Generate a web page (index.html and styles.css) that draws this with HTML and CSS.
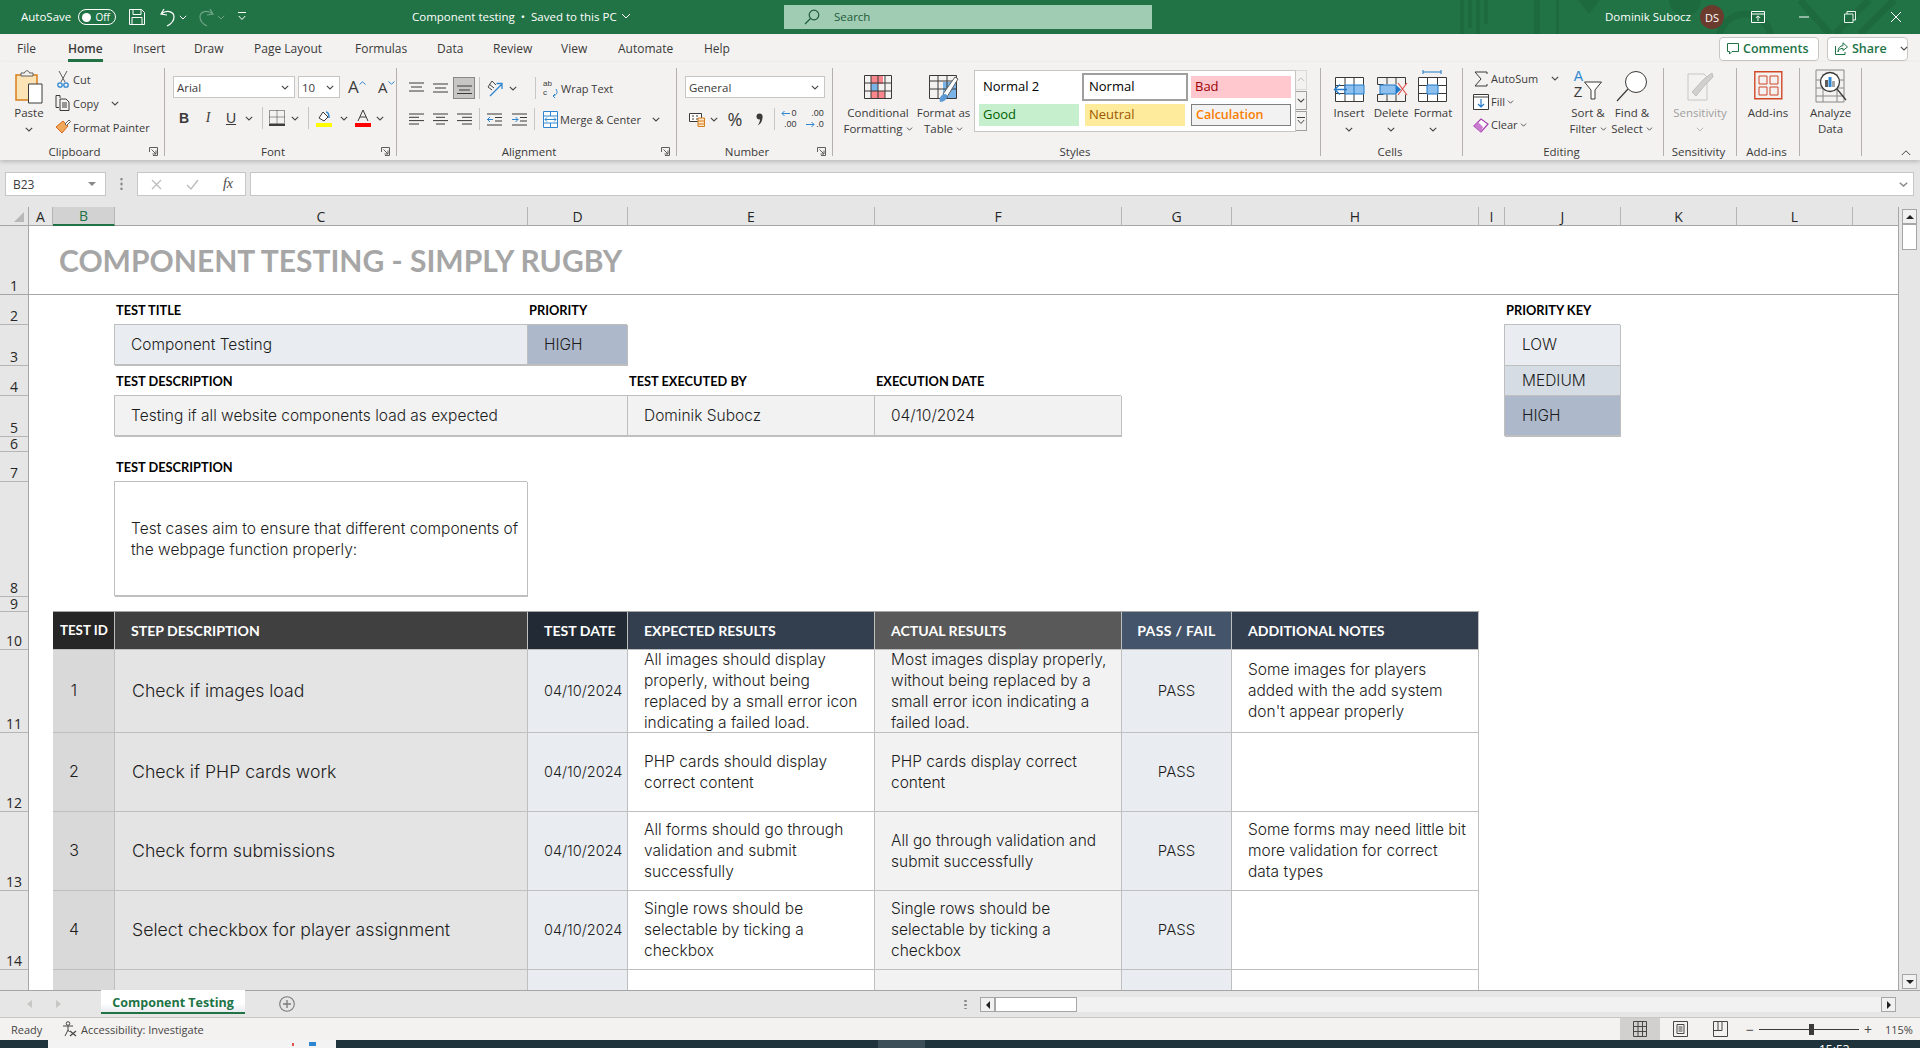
FILE: index.html
```html
<!DOCTYPE html>
<html>

<head>
    <title>Component testing - Excel</title>
    <link rel="stylesheet" href="styles.css">
</head>

<body>
    <svg class="sprite">
        <symbol id="chev" viewBox="0 0 8 5"><path d="M.8.8 4 4 7.2.8" fill="none" stroke="#484644" stroke-width="1.1"/></symbol>
        <symbol id="launcher" viewBox="0 0 9 9"><path d="M.5 5V.5H8.5V8.5H4M2.5 2.5 7 7M3.5 7H7V3.5" fill="none" stroke="#605e5c"/></symbol>
    </svg>

    <header class="titlebar">
        <svg class="title-art" width="460" height="34" viewBox="0 0 460 34">
            <g fill="#1d6a3f">
                <rect x="0" width="4" height="34"/><rect x="8" width="4" height="28"/><rect x="16" width="4" height="34"/><rect x="24" width="4" height="24"/><rect x="74" width="6" height="34"/><rect x="96" width="3" height="34"/>
                <path d="M118 0h22l-11 14z"/><circle cx="225" cy="0" r="16"/>
            </g>
            <g fill="none" stroke="#1d6a3f" stroke-width="7">
                <circle cx="285" cy="40" r="26"/><path d="M375 34l34-34M400 34l34-34M340 0l30 34"/>
            </g>
        </svg>
        <div class="qat">
            <span class="raise">AutoSave</span>
            <span class="toggle"><i></i>Off</span>
            <svg width="16" height="16" viewBox="0 0 16 16"><path d="M.5.500h12l3 3v12H.5zM4 .5v5h8v-5M3 15.500v-7h10v7" fill="none" stroke="#fff"/></svg>
            <svg width="16" height="19" viewBox="0 0 16 19"><path d="M4 1 1 6l6 1M1.500 6C6 1.500 14 3 14 9c0 4-3 7-7 9" fill="none" stroke="#fff" stroke-width="1.200"/></svg>
            <svg width="8" height="5" viewBox="0 0 8 5"><path d="M.8.8 4 4 7.200.8" fill="none" stroke="#fff"/></svg>
            <svg class="faded" width="16" height="19" viewBox="0 0 16 19"><path d="M12 1l3 5-6 1M14.500 6C10 1.500 2 3 2 9c0 4 3 7 7 9" fill="none" stroke="#fff" stroke-width="1.200"/></svg>
            <svg class="faded" width="8" height="5" viewBox="0 0 8 5"><path d="M.8.8 4 4 7.200.8" fill="none" stroke="#fff"/></svg>
            <svg width="8" height="10" viewBox="0 0 8 10"><path d="M0 .5h8M.8 4 4 7.500 7.200 4" fill="none" stroke="#fff"/></svg>
        </div>
        <div class="doc-title raise">Component testing &nbsp;•&nbsp; Saved to this PC <svg width="10" height="6" viewBox="0 0 10 6"><path d="M1 1l4 4 4-4" fill="none" stroke="#fff"/></svg></div>
        <div class="search">
            <svg width="16" height="16" viewBox="0 0 16 16"><circle cx="10" cy="6" r="4.800" fill="none" stroke="#1f5c3a" stroke-width="1.200"/><path d="M6.500 9.500 1 15" stroke="#1f5c3a" stroke-width="1.200"/></svg>
            <span class="raise">Search</span>
        </div>
        <div class="user raise">Dominik Subocz</div>
        <div class="avatar">DS</div>
        <div class="winbtns">
            <svg width="14" height="12" viewBox="0 0 14 12"><path d="M.5.500h13v11H.5zM.5 3h13M7 10V5M4.800 7 7 4.800 9.200 7" fill="none" stroke="#fff"/></svg>
            <svg width="12" height="2"><path d="M1 1h10" stroke="#fff"/></svg>
            <svg width="12" height="12" viewBox="0 0 12 12"><path d="M.5 3h8.500v8.500H.5zM3 3V.5h8.500V9H9" fill="none" stroke="#fff" stroke-width=".9"/></svg>
            <svg width="12" height="12" viewBox="0 0 12 12"><path d="M1 1l10 10M11 1 1 11" stroke="#fff"/></svg>
        </div>
    </header>

    <nav class="tabs">
        <div class="tab-list">
            <span>File</span>
            <span><b class="tab-active">Home</b></span>
            <span>Insert</span>
            <span>Draw</span>
            <span>Page Layout</span>
            <span>Formulas</span>
            <span>Data</span>
            <span>Review</span>
            <span>View</span>
            <span>Automate</span>
            <span>Help</span>
        </div>
        <button class="tab-btn comments">
            <svg width="12" height="12" viewBox="0 0 12 12"><path d="M.5.500h11v8H5L2.500 11V8.500h-2z" fill="none" stroke="#217346"/></svg>Comments
        </button>
        <div class="tab-btn share">
            <svg width="13" height="13" viewBox="0 0 13 13"><path d="M8 .8 12.500 5 8 8.500V6.300C5 6.300 3.500 8 3 10 3 6 5 3.800 8 3.600zM.5 4v8.500H10V10" fill="none" stroke="#217346"/></svg>Share
            <svg class="share-chev" width="8" height="5"><use href="#chev"/></svg>
        </div>
    </nav>

    <section class="ribbon">
        <div class="group g-clipboard">
            <div class="group-body">
                <div class="big paste">
                    <svg width="30" height="37" viewBox="0 0 30 37"><path d="M2 7h21v25H2z" fill="#fbe3b5" stroke="#d67f1c" stroke-width="1.500"/><path d="M7 8V5h3.500C11 2 15 2 15.500 5H19v3z" fill="#f3f2f1" stroke="#605e5c"/><path d="M14.500 16h13.500v19H14.500z" fill="#fff" stroke="#3b3a39"/></svg>
                    <span>Paste</span>
                    <svg width="8" height="5"><use href="#chev"/></svg>
                </div>
                <div class="small-col">
                    <div class="small"><svg width="12" height="17" viewBox="0 0 12 17"><path d="M2 0l6 11M10 0 4 11" stroke="#605e5c" fill="none"/><circle cx="3" cy="14" r="2.200" fill="none" stroke="#2e86d0" stroke-width="1.300"/><circle cx="9" cy="14" r="2.200" fill="none" stroke="#2e86d0" stroke-width="1.300"/></svg>Cut</div>
                    <div class="small"><svg width="16" height="16" viewBox="0 0 16 16"><path d="M5 3V.5H1v12h3M5 4h6l3 3v8.500H5zM7 8h5M7 10h5M7 12h5" fill="none" stroke="#3b3a39"/></svg>Copy<svg class="copy-chev" width="8" height="5"><use href="#chev"/></svg></div>
                    <div class="small"><svg width="16" height="16" viewBox="0 0 16 16"><path d="M1 8 8 2l5 5-6 7C5 12 3 10 1 8z" fill="#f0a95a" stroke="#d6691c"/><path d="M10 5l4-4 1.500 1.500-4 4z" fill="#fff" stroke="#605e5c"/></svg>Format Painter</div>
                </div>
            </div>
            <div class="group-foot"><span>Clipboard</span><svg class="launcher" width="9" height="9"><use href="#launcher"/></svg></div>
        </div>

        <div class="group g-font">
            <div class="group-body stack">
                <div class="font-row1">
                    <div class="combo">Arial<svg width="8" height="5"><use href="#chev"/></svg></div>
                    <div class="combo">10<svg width="8" height="5"><use href="#chev"/></svg></div>
                    <div class="growth">A<svg width="7" height="4"><path d="M.5 3.500 3.500.8l3 2.700" fill="none" stroke="#2e86d0"/></svg></div>
                    <div class="growth shrink">A<svg width="7" height="4"><path d="M.5.500 3.500 3.200l3-2.700" fill="none" stroke="#2e86d0"/></svg></div>
                </div>
                <div class="font-row2">
                    <span class="glyph-b">B</span>
                    <span class="glyph-i">I</span>
                    <span class="glyph-u">U</span>
                    <svg width="8" height="5"><use href="#chev"/></svg>
                    <i class="sep"></i>
                    <svg width="16" height="16" viewBox="0 0 16 16"><path d="M.5.500h15v13H.5zM8 .5v13M.5 7h15" fill="none" stroke="#3b3a39" stroke-dasharray="1 1"/><path d="M0 15h16" stroke="#000" stroke-width="1.500"/></svg>
                    <svg width="8" height="5"><use href="#chev"/></svg>
                    <i class="sep"></i>
                    <svg width="16" height="18" viewBox="0 0 16 18"><path d="M3 9l4-6 5 5-4 4z" fill="#fff" stroke="#3b3a39"/><path d="M10 3c3 0 3 4 3 6" fill="none" stroke="#2e86d0" stroke-width="1.500"/><path d="M0 14h16v4H0z" fill="#ffff00"/></svg>
                    <svg width="8" height="5"><use href="#chev"/></svg>
                    <svg width="16" height="18" viewBox="0 0 16 18"><path d="M3 12 8 1l5 11M5 8h6" fill="none" stroke="#3b3a39"/><path d="M0 14h16v4H0z" fill="#ff0000"/></svg>
                    <svg width="8" height="5"><use href="#chev"/></svg>
                </div>
            </div>
            <div class="group-foot"><span>Font</span><svg class="launcher" width="9" height="9"><use href="#launcher"/></svg></div>
        </div>

        <div class="group g-align">
            <div class="group-body stack">
                <div class="align-row1">
                    <svg width="15" height="12" viewBox="0 0 15 12"><path d="M0 1h15M2 5h11M0 9h15" stroke="#3b3a39"/></svg>
                    <svg width="15" height="12" viewBox="0 0 15 12"><path d="M0 2h15M2 6h11M0 10h15" stroke="#3b3a39"/></svg>
                    <span class="tool-on"><svg width="15" height="12" viewBox="0 0 15 12"><path d="M0 4h15M2 8h11M0 11.500h15" stroke="#3b3a39"/></svg></span>
                    <i class="sep"></i>
                    <svg width="17" height="17" viewBox="0 0 17 17"><path d="M3 16 15 4M15 9V3.500H9.500" fill="none" stroke="#2e86d0" stroke-width="1.300"/><path d="M1 7l4 3M2 4l5 4M5 1l4 4M1 7l4-6" fill="none" stroke="#484644"/></svg>
                    <svg width="8" height="5"><use href="#chev"/></svg>
                    <i class="sep sep-end"></i>
                    <div class="small wide-tool"><div class="wrap-ic"><span>ab<br>c</span><svg width="6" height="9" viewBox="0 0 6 9"><path d="M4 0c2 3 1 6-3 7M3 5 1 7l2 2" fill="none" stroke="#2e86d0"/></svg></div>Wrap Text</div>
                </div>
                <div class="align-row2">
                    <svg width="15" height="12" viewBox="0 0 15 12"><path d="M0 1h15M0 4.300h10M0 7.600h15M0 11h10" stroke="#3b3a39"/></svg>
                    <svg width="15" height="12" viewBox="0 0 15 12"><path d="M0 1h15M3 4.300h9M0 7.600h15M3 11h9" stroke="#3b3a39"/></svg>
                    <svg width="15" height="12" viewBox="0 0 15 12"><path d="M0 1h15M5 4.300h10M0 7.600h15M5 11h10" stroke="#3b3a39"/></svg>
                    <i class="sep"></i>
                    <svg width="15" height="13" viewBox="0 0 15 13"><path d="M0 1h15M8 4.500h7M8 8h7M0 12h15" stroke="#3b3a39"/><path d="M6 6.500H0M3 4 .5 6.500 3 9" fill="none" stroke="#2e86d0"/></svg>
                    <svg width="15" height="13" viewBox="0 0 15 13"><path d="M0 1h15M8 4.500h7M8 8h7M0 12h15" stroke="#3b3a39"/><path d="M0 6.500h6M3.500 4 6 6.500 3.500 9" fill="none" stroke="#2e86d0"/></svg>
                    <i class="sep"></i>
                    <div class="small wide-tool"><svg width="15" height="17" viewBox="0 0 15 17"><path d="M.5.500h14v16H.5zM.5 5h14M.5 12h14M7.500 .5V5M7.500 12v4.500" fill="#fff" stroke="#2e86d0"/><path d="M2 8.500h11M4 6.500l-2 2 2 2M11 6.500l2 2-2 2" fill="none" stroke="#2e86d0"/></svg>Merge &amp; Center<svg class="merge-chev" width="8" height="5"><use href="#chev"/></svg></div>
                </div>
            </div>
            <div class="group-foot"><span>Alignment</span><svg class="launcher" width="9" height="9"><use href="#launcher"/></svg></div>
        </div>

        <div class="group g-number">
            <div class="group-body stack">
                <div class="combo combo-general">General<svg width="8" height="5"><use href="#chev"/></svg></div>
                <div class="number-row">
                    <svg width="16" height="15" viewBox="0 0 16 15"><path d="M.5 1.500h12v8H.5z" fill="#fff" stroke="#3b3a39"/><path d="M3 4h2M3 7h2M7 4h2M7 7h2" stroke="#3b3a39"/><path d="M9 6h6.500v8.500H9z" fill="#fce4c4" stroke="#d67f1c"/><path d="M9 9h6.500M9 12h6.500" stroke="#d67f1c"/></svg>
                    <svg width="8" height="5"><use href="#chev"/></svg>
                    <span class="glyph-pct">%</span>
                    <svg width="7" height="13" viewBox="0 0 7 13"><circle cx="3.500" cy="3.500" r="3" fill="#3b3a39"/><path d="M6.500 3.500C6.500 8 5 11 1.500 12.500 3.500 10 4 8 4 6z" fill="#3b3a39"/></svg>
                    <i class="sep"></i>
                    <div class="dec">
                        <div class="dec-line"><svg width="9" height="7" viewBox="0 0 9 7"><path d="M9 3.500H1M3.500 1 1 3.500 3.500 6" fill="none" stroke="#2e86d0"/></svg>0</div>
                        <div class="dec-line">.00</div>
                    </div>
                    <div class="dec">
                        <div class="dec-line">.00</div>
                        <div class="dec-line"><svg width="9" height="7" viewBox="0 0 9 7"><path d="M0 3.500h8M5.500 1 8 3.500 5.500 6" fill="none" stroke="#2e86d0"/></svg>.0</div>
                    </div>
                </div>
            </div>
            <div class="group-foot"><span>Number</span><svg class="launcher" width="9" height="9"><use href="#launcher"/></svg></div>
        </div>

        <div class="group g-styles">
            <div class="group-body">
                <div class="big w-cf">
                    <svg width="28" height="37" viewBox="0 0 28 37"><path d="M7 7h12v9H7zM7 23h14v7H7z" fill="#f8868c"/><path d="M7 16h7v7H7z" fill="#79b3e8"/><path d="M.5 7.500h27v23H.5zM7 7.500v23M14 7.500v23M21 7.500v23M.5 15h27M.5 23h27" fill="none" stroke="#3b3a39"/></svg>
                    <span>Conditional</span>
                    <span>Formatting <svg width="7" height="4"><use href="#chev"/></svg></span>
                </div>
                <div class="big w-ft">
                    <svg width="30" height="37" viewBox="0 0 30 37"><path d="M14 14h14v16H14z" fill="#79b3e8"/><path d="M.5 7.500h27v23H.5z" fill="none" stroke="#3b3a39"/><path d="M.5 13h27M.5 21h27M9 7.500v23M18 7.500v23" fill="none" stroke="#3b3a39"/><path d="M14 26 26 9l3 2-11 18z" fill="#fff" stroke="#605e5c"/><path d="M11 34c-2-6 5-10 7-7 1 4-3 7-7 7z" fill="#5a9ad5"/></svg>
                    <span>Format as</span>
                    <span>Table <svg width="7" height="4"><use href="#chev"/></svg></span>
                </div>
                <div class="gallery">
                    <div class="style-grid">
                        <div class="style">Normal 2</div>
                        <div class="style style-sel">Normal</div>
                        <div class="style style-bad">Bad</div>
                        <div class="style style-good">Good</div>
                        <div class="style style-neutral">Neutral</div>
                        <div class="style style-calc">Calculation</div>
                    </div>
                    <div class="gallery-scroll">
                        <span class="disabled"><svg width="8" height="5" viewBox="0 0 8 5"><path d="M.8 4 4 .8 7.200 4" fill="none" stroke="#bbb"/></svg></span>
                        <span><svg width="8" height="5"><use href="#chev"/></svg></span>
                        <span><svg width="8" height="8" viewBox="0 0 8 8"><path d="M0 .5h8M.8 3 4 6.500 7.200 3" fill="none" stroke="#484644"/></svg></span>
                    </div>
                </div>
            </div>
            <div class="group-foot"><span>Styles</span></div>
        </div>

        <div class="group g-cells">
            <div class="group-body">
                <div class="big w-cell">
                    <svg width="33" height="37" viewBox="0 0 33 37"><path d="M2.500 9.500h28v24h-28zM2.500 17.500h28M2.500 25.500h28M12 9.500v24M21 9.500v24" fill="#fff" stroke="#3b3a39"/><path d="M12 17h19v9H12z" fill="#8dc0ee" stroke="#1f78c8"/><path d="M21 17v9" stroke="#1f78c8"/><path d="M14 21.500H2M7 16.500 1.500 21.500l5.500 5" fill="none" stroke="#1f78c8" stroke-width="1.300"/></svg>
                    <span>Insert</span>
                    <svg width="8" height="5"><use href="#chev"/></svg>
                </div>
                <div class="big w-cell">
                    <svg width="33" height="37" viewBox="0 0 33 37"><path d="M2.500 9.500h28v7M2.500 33.500h28v-7M2.500 9.500v7h6M2.500 33.500v-7h6M12 9.500v7M21 9.500v7M12 33.500v-7M21 33.500v-7" fill="none" stroke="#3b3a39"/><path d="M5 17h16v9H5z" fill="#8dc0ee" stroke="#1f78c8"/><path d="M21 17l5 4.500-5 4.500z" fill="#1f78c8"/><path d="M23 15l9 12M32 15l-9 12" stroke="#e0524c" stroke-width="1.200"/></svg>
                    <span>Delete</span>
                    <svg width="8" height="5"><use href="#chev"/></svg>
                </div>
                <div class="big w-cell">
                    <svg width="30" height="37" viewBox="0 0 30 37"><path d="M.5 9.500h28v24H.5zM.5 17.500h28M.5 25.500h28M9.500 9.500v24M19.500 9.500v24" fill="#fff" stroke="#3b3a39"/><path d="M9 17h11v9H9z" fill="#8dc0ee" stroke="#1f78c8"/><path d="M5 4h18M5 2v4M23 2v4" stroke="#1f78c8"/></svg>
                    <span>Format</span>
                    <svg width="8" height="5"><use href="#chev"/></svg>
                </div>
            </div>
            <div class="group-foot"><span>Cells</span></div>
        </div>

        <div class="group g-editing">
            <div class="group-body">
                <div class="small-col w-edit">
                    <div class="small"><svg width="14" height="16" viewBox="0 0 14 16"><path d="M13 3V1H1l6 7-6 7h12v-2" fill="none" stroke="#3b3a39"/></svg>AutoSum<svg class="sum-chev" width="8" height="5"><use href="#chev"/></svg></div>
                    <div class="small"><svg width="16" height="16" viewBox="0 0 16 16"><path d="M.5.500h15v15H.5zM.5 3h15" fill="#fff" stroke="#3b3a39"/><path d="M8 5v8M5 10l3 3 3-3" fill="none" stroke="#1f78c8" stroke-width="1.200"/></svg>Fill <svg width="7" height="4"><use href="#chev"/></svg></div>
                    <div class="small"><svg width="16" height="16" viewBox="0 0 16 16"><path d="M1 9 8 2l7 5-7 8z" fill="#fff" stroke="#a83fb0" stroke-width="1.200"/><path d="M1 9l4-4 5 5-2 5z" fill="#c97bd0"/></svg>Clear <svg width="7" height="4"><use href="#chev"/></svg></div>
                </div>
                <div class="big w-edit-big">
                    <div class="sort-ic">
                        <div class="az"><b>A</b><br>Z</div>
                        <svg width="18" height="19" viewBox="0 0 18 19"><path d="M.5 1h17L11 9v9H7V9z" fill="#fff" stroke="#3b3a39"/></svg>
                    </div>
                    <span>Sort &amp;</span>
                    <span>Filter <svg width="7" height="4"><use href="#chev"/></svg></span>
                </div>
                <div class="big w-edit-big">
                    <svg width="32" height="37" viewBox="0 0 32 37"><circle cx="20" cy="14" r="10.500" fill="#fff" stroke="#3b3a39"/><path d="M12 21 1 33" stroke="#3b3a39" stroke-width="1.200"/></svg>
                    <span>Find &amp;</span>
                    <span>Select <svg width="7" height="4"><use href="#chev"/></svg></span>
                </div>
            </div>
            <div class="group-foot"><span>Editing</span></div>
        </div>

        <div class="group g-sens">
            <div class="group-body">
                <div class="big disabled-text">
                    <svg width="28" height="37" viewBox="0 0 28 37"><path d="M2 6h16l3 3v23H2z" fill="#f3f2f1" stroke="#c8c6c4"/><path d="M6 24 18 11l8-6 1 4-8 8-9 11z" fill="#d2d0ce" stroke="#c0bebc"/></svg>
                    <span>Sensitivity</span>
                    <svg width="8" height="5" viewBox="0 0 8 5"><path d="M.8.8 4 4 7.200.8" fill="none" stroke="#bbb"/></svg>
                </div>
            </div>
            <div class="group-foot"><span>Sensitivity</span></div>
        </div>

        <div class="group g-addins">
            <div class="group-body">
                <div class="big">
                    <svg width="29" height="37" viewBox="0 0 29 37"><path d="M.8 3.800h27v27h-27z" fill="none" stroke="#d24726" stroke-width="1.400"/><path d="M5 8h8v8H5zM16 8h8v8h-8zM5 19h8v8H5zM16 19h8v8h-8z" fill="none" stroke="#d24726"/></svg>
                    <span>Add-ins</span>
                </div>
            </div>
            <div class="group-foot"><span>Add-ins</span></div>
        </div>

        <div class="group g-analyze">
            <div class="group-body">
                <div class="big">
                    <svg width="32" height="37" viewBox="0 0 32 37"><path d="M1 2h28v4H1z" fill="#605e5c"/><path d="M1 2h28v32H1zM1 12h28M1 20h28M1 28h28M8 6v28M22 6v28" fill="#f3f2f1" stroke="#8a8886"/><circle cx="15" cy="14" r="9.500" fill="#fff" stroke="#3b3a39" stroke-width="1.300"/><path d="M10 12h3v7h-3z" fill="#605e5c"/><path d="M13.500 9h3v10h-3z" fill="#2e86d0"/><path d="M17 13h3v6h-3z" fill="#a6a6a6"/><path d="M22 21l9 11" stroke="#3b3a39" stroke-width="1.300"/></svg>
                    <span>Analyze</span>
                    <span>Data</span>
                </div>
            </div>
        </div>

        <svg class="collapse" width="10" height="6" viewBox="0 0 10 6"><path d="M.8 5 5 .8 9.200 5" fill="none" stroke="#484644"/></svg>
    </section>

    <section class="formula-bar">
        <div class="name-box">B23<svg width="8" height="4" viewBox="0 0 8 4"><path d="M0 0h8L4 4z" fill="#8a8886"/></svg></div>
        <div class="fb-dots"></div>
        <div class="fb-actions">
            <svg width="11" height="11" viewBox="0 0 11 11"><path d="M1 1l9 9M10 1l-9 9" stroke="#bdbbb9" stroke-width="1.200"/></svg>
            <svg width="13" height="11" viewBox="0 0 13 11"><path d="M1 6l4 4 7-9" fill="none" stroke="#bdbbb9" stroke-width="1.300"/></svg>
            <span class="fx">fx</span>
        </div>
        <div class="fb-input"><svg width="9" height="5" viewBox="0 0 9 5"><path d="M.8.800 4.500 4 8.200.8" fill="none" stroke="#8a8886" stroke-width="1.500"/></svg></div>
    </section>

    <main class="workspace">
        <div class="sheet">
            <div class="corner r0 rowhead-col"><i></i></div>
            <div class="colhead r0 ca">A</div>
            <div class="colhead r0 cb selected">B</div>
            <div class="colhead r0 cc">C</div>
            <div class="colhead r0 cd">D</div>
            <div class="colhead r0 ce">E</div>
            <div class="colhead r0 cf">F</div>
            <div class="colhead r0 cg">G</div>
            <div class="colhead r0 ch">H</div>
            <div class="colhead r0 ci">I</div>
            <div class="colhead r0 cj">J</div>
            <div class="colhead r0 ck">K</div>
            <div class="colhead r0 cl">L</div>
            <div class="colhead r0 cm"></div>

            <div class="rowhead r1 strong">1</div>
            <div class="rowhead r2">2</div>
            <div class="rowhead r3">3</div>
            <div class="rowhead r4">4</div>
            <div class="rowhead r5">5</div>
            <div class="rowhead r6">6</div>
            <div class="rowhead r7">7</div>
            <div class="rowhead r8">8</div>
            <div class="rowhead r9">9</div>
            <div class="rowhead r10">10</div>
            <div class="rowhead r11">11</div>
            <div class="rowhead r12">12</div>
            <div class="rowhead r13">13</div>
            <div class="rowhead r14">14</div>
            <div class="rowhead r15"></div>

            <div class="sheet-title r1">COMPONENT TESTING - SIMPLY RUGBY</div>

            <div class="label r2 cc">TEST TITLE</div>
            <div class="label r2 cd">PRIORITY</div>
            <div class="label r2 cj">PRIORITY KEY</div>

            <div class="value tint r3 cc">Component Testing</div>
            <div class="value high r3 cd">HIGH</div>
            <div class="value tint key r3 cj">LOW</div>

            <div class="label r4 cc">TEST DESCRIPTION</div>
            <div class="label r4 ce">TEST EXECUTED BY</div>
            <div class="label r4 cf">EXECUTION DATE</div>
            <div class="value medium key r4 cj">MEDIUM</div>

            <div class="value plain r5 span-cd">Testing if all website components load as expected</div>
            <div class="value plain r5 ce">Dominik Subocz</div>
            <div class="value plain r5 cf">04/10/2024</div>
            <div class="value high key-last r5 cj">HIGH</div>

            <div class="label r7 cc">TEST DESCRIPTION</div>
            <div class="value box r8 cc">Test cases aim to ensure that different components of<br>the webpage function properly:</div>

            <div class="th r10 cb id-head">TEST ID</div>
            <div class="th r10 cc step-head">STEP DESCRIPTION</div>
            <div class="th r10 cd date-head">TEST DATE</div>
            <div class="th r10 ce navy">EXPECTED RESULTS</div>
            <div class="th r10 cf grey">ACTUAL RESULTS</div>
            <div class="th r10 cg pass-head">PASS / FAIL</div>
            <div class="th r10 ch navy">ADDITIONAL NOTES</div>

            <div class="td id r11 cb">1</div>
            <div class="td step r11 cc">Check if images load</div>
            <div class="td date r11 cd">04/10/2024</div>
            <div class="td text r11 ce">All images should display<br>properly, without being<br>replaced by a small error icon<br>indicating a failed load.</div>
            <div class="td text shade r11 cf">Most images display properly,<br>without being replaced by a<br>small error icon indicating a<br>failed load.</div>
            <div class="td pass r11 cg">PASS</div>
            <div class="td text r11 ch">Some images for players<br>added with the add system<br>don't appear properly</div>

            <div class="td id r12 cb">2</div>
            <div class="td step r12 cc">Check if PHP cards work</div>
            <div class="td date r12 cd">04/10/2024</div>
            <div class="td text r12 ce">PHP cards should display<br>correct content</div>
            <div class="td text shade r12 cf">PHP cards display correct<br>content</div>
            <div class="td pass r12 cg">PASS</div>
            <div class="td text r12 ch"></div>

            <div class="td id r13 cb">3</div>
            <div class="td step r13 cc">Check form submissions</div>
            <div class="td date r13 cd">04/10/2024</div>
            <div class="td text r13 ce">All forms should go through<br>validation and submit<br>successfully</div>
            <div class="td text shade r13 cf">All go through validation and<br>submit successfully</div>
            <div class="td pass r13 cg">PASS</div>
            <div class="td text r13 ch">Some forms may need little bit<br>more validation for correct<br>data types</div>

            <div class="td id r14 cb">4</div>
            <div class="td step r14 cc">Select checkbox for player assignment</div>
            <div class="td date r14 cd">04/10/2024</div>
            <div class="td text r14 ce">Single rows should be<br>selectable by ticking a<br>checkbox</div>
            <div class="td text shade r14 cf">Single rows should be<br>selectable by ticking a<br>checkbox</div>
            <div class="td pass r14 cg">PASS</div>
            <div class="td text r14 ch"></div>

            <div class="td id r15 cb"></div>
            <div class="td step r15 cc"></div>
            <div class="td date r15 cd"></div>
            <div class="td text r15 ce"></div>
            <div class="td text shade r15 cf"></div>
            <div class="td pass r15 cg"></div>
            <div class="td text r15 ch"></div>
        </div>

        <div class="vscroll">
            <span class="scroll-btn"><svg width="8" height="4" viewBox="0 0 8 4"><path d="M4 0l4 4H0z" fill="#222"/></svg></span>
            <span class="vthumb"></span>
            <span class="scroll-btn down"><svg width="8" height="4" viewBox="0 0 8 4"><path d="M0 0h8L4 4z" fill="#222"/></svg></span>
        </div>
    </main>

    <section class="sheetbar">
        <div class="sheet-nav">
            <svg width="5" height="8" viewBox="0 0 5 8"><path d="M5 0v8L0 4z" fill="#c8c6c4"/></svg>
            <svg width="5" height="8" viewBox="0 0 5 8"><path d="M0 0v8l5-4z" fill="#c8c6c4"/></svg>
        </div>
        <div class="sheet-tab">Component Testing</div>
        <svg class="add-sheet" width="16" height="16" viewBox="0 0 16 16"><circle cx="8" cy="8" r="7.300" fill="none" stroke="#7a7a7a" stroke-width="1.100"/><path d="M4 8h8M8 4v8" stroke="#7a7a7a" stroke-width="1.300"/></svg>
        <div class="split-dots"></div>
        <div class="hscroll">
            <span class="scroll-btn"><svg width="4" height="8" viewBox="0 0 4 8"><path d="M4 0v8L0 4z" fill="#222"/></svg></span>
            <span class="hthumb"></span>
            <span class="scroll-btn end"><svg width="4" height="8" viewBox="0 0 4 8"><path d="M0 0v8l4-4z" fill="#222"/></svg></span>
        </div>
    </section>

    <footer class="statusbar">
        <span class="ready">Ready</span>
        <svg width="15" height="16" viewBox="0 0 15 16"><circle cx="6" cy="2.500" r="1.800" fill="none" stroke="#484644"/><path d="M1 5h10M6 5v4L3 15M6 9l1.500 2" fill="none" stroke="#484644"/><path d="M8 10l6 5M14 10l-6 5" stroke="#484644" stroke-width="1.200"/></svg>
        <span class="a11y">Accessibility: Investigate</span>
        <div class="views">
            <span class="view on"><svg width="14" height="16" viewBox="0 0 14 16"><path d="M.5.500h13v15H.5zM.5 5.500h13M.5 10.500h13M5 .5v15M9.500 .5v15" fill="none" stroke="#484644"/></svg></span>
            <span class="view"><svg width="15" height="16" viewBox="0 0 15 16"><path d="M.5.500h14v15H.5zM4 3.500h7v9H4zM5.500 6h4M5.500 8h4M5.500 10h4" fill="none" stroke="#484644"/></svg></span>
            <span class="view"><svg width="15" height="16" viewBox="0 0 15 16"><path d="M.5.500h14v15H.5zM.5 9.500H9V.5M5 .5v9" fill="none" stroke="#484644"/></svg></span>
        </div>
        <span class="zoom-sign">−</span>
        <div class="slider"><i></i></div>
        <span class="zoom-sign">+</span>
        <span class="zoom-val">115%</span>
    </footer>

    <div class="taskbar">
        <div class="task-window"><svg width="24" height="6" viewBox="0 0 24 6"><path d="M0 3h2v3H0z" fill="#e0524c"/><path d="M17 2h7v4h-7z" fill="#2e86d0"/></svg></div>
        <div class="task-active"></div>
        <div class="task-clock">15:53</div>
    </div>
</body>

</html>
```

FILE: styles.css
```css
* {
    box-sizing: border-box;
}

html,
body {
    margin: 0;
    height: 100%;
    overflow: hidden;
}

body {
    font-family: "Open Sans", sans-serif;
    font-size: 11.5px;
    color: #3b3a39;
    background-color: #f3f2f1;
}

svg {
    display: block;
    flex: none;
}

.sprite {
    display: none;
}

/* title bar */
.titlebar {
    position: relative;
    display: flex;
    align-items: center;
    height: 34px;
    background-color: #217346;
    color: white;
}

.title-art {
    position: absolute;
    left: 1460px;
    top: 0;
}

.raise {
    margin-bottom: 2px;
}

.qat {
    display: grid;
    grid-template-columns: 57px 51px 31px 19px 19px 19px 21px auto;
    align-items: center;
    width: 412px;
    padding-left: 21px;
}

.toggle {
    display: flex;
    align-items: center;
    justify-content: flex-end;
    width: 38px;
    height: 16px;
    padding-right: 5px;
    border: 1px solid white;
    border-radius: 8px;
    font-size: 10px;
}

.toggle i {
    width: 9px;
    height: 9px;
    margin-right: auto;
    margin-left: 3px;
    border-radius: 50%;
    background-color: white;
}

.faded {
    opacity: 0.35;
}

.doc-title {
    display: flex;
    align-items: center;
    gap: 1px;
    width: 372px;
    white-space: pre;
}

.search {
    display: flex;
    align-items: center;
    gap: 14px;
    width: 368px;
    height: 24px;
    padding-left: 20px;
    background-color: #a0ccb3;
    color: #1f5c3a;
}

.user {
    margin-left: 453px;
    width: 95px;
    white-space: nowrap;
    position: relative;
}

.avatar {
    display: flex;
    align-items: center;
    justify-content: center;
    width: 24px;
    height: 24px;
    border-radius: 50%;
    background-color: #6b3b2e;
    font-size: 11px;
    position: relative;
}

.winbtns {
    display: grid;
    grid-template-columns: repeat(4, 46px);
    justify-items: center;
    align-items: center;
    margin-left: 11px;
    position: relative;
}

/* tabs */
.tabs {
    display: flex;
    align-items: center;
    height: 28px;
    padding-left: 17px;
    font-size: 12px;
}

.tab-list {
    display: grid;
    grid-template-columns: 51px 65px 61px 60px 101px 82px 56px 68px 57px 86px 40px;
}

.tab-list span {
    line-height: 30px;
    height: 28px;
}

.tab-active {
    display: inline-block;
    font-weight: 600;
    height: 28px;
    line-height: 30px;
    color: #3b3a39;
    border-bottom: 3px solid #217346;
}

.tab-btn {
    display: flex;
    align-items: center;
    gap: 4px;
    height: 24px;
    margin-top: 1px;
    border: 1px solid #c8c6c4;
    border-radius: 4px;
    background-color: white;
    font-family: inherit;
    font-size: 12.5px;
    font-weight: 600;
    color: #217346;
}

.comments {
    width: 100px;
    margin-left: 975px;
    padding: 0 0 0 7px;
}

.share {
    width: 81px;
    margin-left: 8px;
    padding-left: 7px;
}

.share-chev {
    margin-left: 9px;
}

/* ribbon */
.ribbon {
    display: flex;
    align-items: flex-start;
    height: 98px;
    padding-top: 6px;
    box-shadow: 0 2px 4px rgba(0, 0, 0, 0.18);
    position: relative;
}

.group {
    display: flex;
    flex-direction: column;
    flex: none;
    height: 88px;
    border-right: 1px solid #b3b0ad;
}

.group-body {
    display: flex;
    height: 78px;
}

.group-body.stack {
    flex-direction: column;
    padding-top: 8px;
    gap: 9px;
}

.group-foot {
    display: flex;
    align-items: center;
    height: 10px;
    padding-right: 3px;
}

.group-foot span {
    flex: 1;
    text-align: center;
    font-size: 11.5px;
}

.launcher {
    margin-right: 3px;
}

.g-clipboard { width: 165px; }
.g-font { width: 232px; }
.g-align { width: 280px; }
.g-number { width: 156px; }
.g-styles { width: 488px; }
.g-cells { width: 142px; }
.g-editing { width: 201px; }
.g-sens { width: 73px; }
.g-addins { width: 63px; }
.g-analyze { width: 62px; }

.g-font .group-body,
.g-align .group-body,
.g-number .group-body {
    padding-left: 8px;
}

.g-cells .group-body {
    padding-left: 7px;
}

.g-styles .group-body {
    padding-left: 10px;
}

.g-editing .group-body {
    padding-left: 10px;
}

.big {
    display: flex;
    flex-direction: column;
    align-items: center;
    flex: 1;
    line-height: 16px;
    white-space: nowrap;
}

.big span {
    display: flex;
    align-items: center;
    gap: 3px;
}

.big > svg:not(:first-child) {
    margin-top: 6px;
}

.paste {
    flex: none;
    width: 50px;
    margin-left: 4px;
}

.small-col {
    display: flex;
    flex-direction: column;
    margin-left: 1px;
    margin-top: -1px;
}

.small {
    display: flex;
    align-items: center;
    gap: 2px;
    height: 24px;
    font-size: 11px;
    white-space: nowrap;
}

.small-col .small > svg:first-child {
    width: 16px;
}

.copy-chev {
    margin-left: 10px;
}

.combo {
    display: flex;
    align-items: center;
    justify-content: space-between;
    height: 22px;
    padding: 0 5px 0 3px;
    border: 1px solid #c8c6c4;
    background-color: white;
    font-size: 11.5px;
}

.font-row1 {
    display: grid;
    grid-template-columns: 122px 42px 26px 20px;
    column-gap: 3px;
    height: 22px;
}

.growth {
    display: flex;
    font-size: 17px;
    line-height: 22px;
    padding-left: 5px;
}

.growth svg {
    margin-top: 5px;
}

.shrink {
    font-size: 15px;
    padding-left: 6px;
}

.font-row2 {
    display: grid;
    grid-template-columns: 24px 24px 22px 14px 12px 18px 18px 8px 24px 16px 22px 12px;
    justify-items: center;
    align-items: center;
    height: 22px;
    margin-left: -1px;
    font-size: 14px;
}

.glyph-b {
    font-weight: 700;
    font-family: "Liberation Sans", sans-serif;
}

.glyph-i {
    font-style: italic;
    font-family: "Liberation Serif", serif;
}

.glyph-u {
    text-decoration: underline;
    font-family: "Liberation Sans", sans-serif;
}

.sep {
    display: block;
    width: 1px;
    height: 22px;
    background-color: #c8c6c4;
}

.align-row1,
.align-row2 {
    display: grid;
    justify-items: center;
    align-items: center;
    height: 22px;
    margin-left: -1px;
}

.align-row1 {
    grid-template-columns: 24px 24px 24px 6px 26px 10px 18px auto;
}

.align-row2 {
    grid-template-columns: 24px 24px 24px 6px 24px 26px 4px auto;
}

.tool-on {
    display: flex;
    align-items: center;
    justify-content: center;
    width: 22px;
    height: 22px;
    background-color: #c8c6c4;
    border: 1px solid #8a8886;
}

.sep-end {
    justify-self: end;
}

.wide-tool {
    margin-left: 7px;
    justify-self: start;
}

.wrap-ic {
    display: flex;
    align-items: flex-end;
    width: 16px;
    font-family: "Liberation Sans", sans-serif;
    font-size: 8px;
    line-height: 9.5px;
}

.merge-chev {
    margin-left: 9px;
}

.combo-general {
    width: 140px;
}

.number-row {
    display: grid;
    grid-template-columns: 24px 10px 32px 16px 14px 16px 36px;
    justify-items: center;
    align-items: center;
    height: 22px;
}

.glyph-pct {
    font-size: 18px;
}

.dec {
    display: flex;
    flex-direction: column;
    align-items: flex-end;
    font-family: "Liberation Sans", sans-serif;
    font-size: 9px;
    line-height: 11px;
}

.dec-line {
    display: flex;
    align-items: center;
    gap: 1px;
    height: 11px;
}

.w-cf {
    flex: none;
    width: 70px;
}

.w-ft {
    flex: none;
    width: 61px;
}

.gallery {
    display: flex;
    align-items: flex-start;
    margin: 2px 0 0;
    font-size: 13px;
}

.style-grid {
    display: grid;
    grid-template-columns: repeat(3, 100px);
    grid-template-rows: 22px 22px;
    gap: 6px;
    width: 322px;
    height: 62px;
    padding: 5px 0 0 4px;
    border: 1px solid #c8c6c4;
    background-color: white;
    color: black;
}

.style {
    display: flex;
    align-items: center;
    padding: 0 0 2px 4px;
}

.style-sel {
    outline: 2px solid #a19f9d;
    outline-offset: 1px;
}

.style-bad { background-color: #ffc7ce; color: #9c0006; }
.style-good { background-color: #c6efce; color: #006100; }
.style-neutral { background-color: #ffeb9c; color: #9c5700; }

.style-calc {
    background-color: #f2f2f2;
    border: 1px solid #7f7f7f;
    color: #fa7d00;
    font-size: 12.5px;
    font-weight: 600;
}

.gallery-scroll {
    display: flex;
    flex-direction: column;
    width: 11px;
    height: 62px;
}

.gallery-scroll span {
    display: flex;
    flex: 1;
    align-items: center;
    justify-content: center;
    border: 1px solid #a19f9d;
    border-left: none;
    margin-bottom: 1px;
}

.gallery-scroll .disabled {
    border-color: #dcdad8;
    background-color: #f3f2f1;
}

.w-cell {
    flex: none;
    width: 42px;
}

.w-edit {
    width: 93px;
    flex: none;
    margin-left: 0;
}

.w-edit .small {
    height: 23px;
}

.sum-chev {
    margin-left: 11px;
}

.w-edit-big {
    flex: none;
    width: 44px;
}

.sort-ic {
    display: flex;
    align-items: flex-end;
    gap: 1px;
    height: 37px;
    padding-bottom: 5px;
}

.az {
    font-family: "Liberation Sans", sans-serif;
    font-size: 14px;
    line-height: 16px;
}

.az b {
    font-weight: 400;
    color: #2e86d0;
}

.disabled-text {
    color: #a19f9d;
}

.collapse {
    margin: 82px 0 0 39px;
}

/* formula bar */
.formula-bar {
    display: flex;
    height: 47px;
    padding: 12px 6px 11px 5px;
    background-color: #e6e6e6;
}

.name-box {
    display: flex;
    align-items: center;
    justify-content: space-between;
    width: 101px;
    padding: 0 9px 0 7px;
    border: 1px solid #c8c6c4;
    background-color: white;
    font-size: 12px;
}

.fb-dots {
    width: 31px;
    margin: 6px 0;
    background: radial-gradient(circle, #8a8886 1px, transparent 1.500px) center / 3px 5px repeat-y;
}

.fb-actions {
    display: grid;
    grid-template-columns: 36px 36px 36px;
    justify-items: center;
    align-items: center;
    width: 109px;
    border: 1px solid #c8c6c4;
    background-color: white;
}

.fx {
    font-family: "Liberation Serif", serif;
    font-style: italic;
    font-size: 14px;
    color: #484644;
}

.fb-input {
    display: flex;
    flex: 1;
    align-items: center;
    justify-content: flex-end;
    margin-left: 4px;
    padding-right: 5px;
    border: 1px solid #c8c6c4;
    background-color: white;
}

/* worksheet */
.workspace {
    display: flex;
    height: 784px;
    background-color: #e6e6e6;
    border-bottom: 1px solid #a6a6a6;
    overflow: hidden;
}

.sheet {
    display: grid;
    grid-template-columns:
        [rh] 29px [ca] 24px [cb] 62px [cc] 413px [cd] 100px [ce] 247px [cf] 247px
        [cg] 110px [ch] 247px [ci] 26px [cj] 116px [ck] 116px [cl] 116px [cm] 46px [end];
    grid-template-rows: 19px 69px 30px 41px 30px 41px 15px 30px 115px 15px 38px 83px 79px 79px 79px 40px;
    width: 1899px;
    height: 783px;
    flex: none;
    background:
        linear-gradient(#e6e6e6, #e6e6e6) left / 28px 100% no-repeat,
        linear-gradient(#e6e6e6, #e6e6e6) top / 100% 18px no-repeat,
        white;
    border-right: 1px solid #a6a6a6;
    font-family: Inter, sans-serif;
    font-weight: 300;
    color: #1c1c1c;
    overflow: hidden;
}

.r0 { grid-row: 1; }
.r1 { grid-row: 2; }
.r2 { grid-row: 3; }
.r3 { grid-row: 4; }
.r4 { grid-row: 5; }
.r5 { grid-row: 6; }
.r6 { grid-row: 7; }
.r7 { grid-row: 8; }
.r8 { grid-row: 9; }
.r9 { grid-row: 10; }
.r10 { grid-row: 11; }
.r11 { grid-row: 12; }
.r12 { grid-row: 13; }
.r13 { grid-row: 14; }
.r14 { grid-row: 15; }
.r15 { grid-row: 16; }

.ca { grid-column: ca; }
.cb { grid-column: cb; }
.cc { grid-column: cc; }
.cd { grid-column: cd; }
.ce { grid-column: ce; }
.cf { grid-column: cf; }
.cg { grid-column: cg; }
.ch { grid-column: ch; }
.ci { grid-column: ci; }
.cj { grid-column: cj; }
.ck { grid-column: ck; }
.cl { grid-column: cl; }
.cm { grid-column: cm; }
.span-cd { grid-column: cc / ce; }

.corner {
    grid-column: rh;
    display: flex;
    align-items: flex-end;
    justify-content: flex-end;
    padding: 0 4px 3px 0;
    border-right: 1px solid #a6a6a6;
    border-bottom: 1px solid #a6a6a6;
}

.corner i {
    width: 0;
    height: 0;
    border-style: solid;
    border-width: 0 0 10px 10px;
    border-color: transparent transparent #b8b8b8 transparent;
}

.colhead {
    display: flex;
    align-items: center;
    justify-content: center;
    padding-top: 1px;
    border-right: 1px solid #b5b5b5;
    border-bottom: 1px solid #a6a6a6;
    font-family: "Open Sans", sans-serif;
    font-weight: 400;
    font-size: 14px;
    line-height: 18px;
    color: #262626;
}

.cm {
    border-right: none;
}

.selected {
    background-color: #d2d2d2;
    border-bottom: 2px solid #217346;
    color: #217346;
}

.rowhead {
    grid-column: rh;
    display: flex;
    align-items: flex-end;
    justify-content: center;
    background-color: #e6e6e6;
    border-right: 1px solid #a6a6a6;
    border-bottom: 1px solid #b5b5b5;
    font-family: "Open Sans", sans-serif;
    font-weight: 400;
    font-size: 14px;
    line-height: 16px;
    color: #262626;
    overflow: hidden;
}

.rowhead.strong {
    border-bottom-color: #a6a6a6;
}

.r6.rowhead,
.r9.rowhead {
    align-items: center;
}

.sheet-title {
    grid-column: ca / end;
    display: flex;
    align-items: center;
    padding-left: 30px;
    border-bottom: 1px solid #a6a6a6;
    font-family: Lato, sans-serif;
    font-weight: 700;
    font-size: 30px;
    color: #a6a6a6;
}

.label {
    display: flex;
    align-items: center;
    padding-left: 1px;
    font-family: Lato, sans-serif;
    font-weight: 700;
    font-size: 12.8px;
    color: black;
    white-space: nowrap;
}

.value {
    display: flex;
    align-items: center;
    padding-left: 16px;
    border-right: 1px solid #bfbfbf;
    border-bottom: 2px solid #bfbfbf;
    box-shadow: -1px -1px 0 #bfbfbf;
    font-size: 15.500px;
    line-height: 21px;
    white-space: nowrap;
}

.tint { background-color: #e9ecf0; }
.high { background-color: #adb9ca; }
.medium { background-color: #d6dce4; }
.plain { background-color: #f2f2f2; }
.box { background-color: white; }

.key,
.key-last {
    padding-left: 17px;
}

.key {
    padding-bottom: 1px;
    border-bottom-width: 1px;
}

.th {
    display: flex;
    align-items: center;
    padding: 0 0 1px 16px;
    border-right: 1px solid #bfbfbf;
    border-bottom: 1px solid #bfbfbf;
    box-shadow: 0 -1px 0 #a6a6a6;
    font-family: Lato, sans-serif;
    font-weight: 700;
    font-size: 14.1px;
    color: white;
    white-space: nowrap;
}

.id-head {
    background-color: #262626;
    padding-left: 7px;
    font-size: 13.3px;
}

.step-head { background-color: #404040; }
.date-head { background-color: #222b35; }
.navy { background-color: #333f4f; }
.grey { background-color: #595959; }

.pass-head {
    background-color: #44546a;
    justify-content: center;
    padding-left: 0;
    letter-spacing: 0.3px;
}

.td {
    display: flex;
    align-items: center;
    padding-bottom: 1px;
    border-right: 1px solid #bfbfbf;
    border-bottom: 1px solid #bfbfbf;
    font-size: 15.500px;
    line-height: 21px;
    white-space: nowrap;
}

.id {
    justify-content: center;
    padding-right: 19px;
    background-color: #d9d9d9;
    font-size: 16px;
}

.step {
    padding-left: 17px;
    background-color: #e4e4e4;
    font-size: 17.7px;
}

.date {
    padding-left: 16px;
    background-color: #e9ecf0;
    font-size: 14.500px;
}

.text {
    padding-left: 16px;
}

.shade {
    background-color: #f2f2f2;
}

.pass {
    justify-content: center;
    background-color: #e9ecf0;
    font-size: 15px;
}

.vscroll {
    display: flex;
    flex-direction: column;
    align-items: center;
    flex: 1;
    padding: 2px 3px 0 3px;
    background-color: #e6e6e6;
}

.scroll-btn {
    display: flex;
    align-items: center;
    justify-content: center;
    flex: none;
    width: 15px;
    height: 15px;
    border: 1px solid #a6a6a6;
    background-color: #f1f1f1;
}

.vthumb {
    width: 15px;
    height: 26px;
    border: 1px solid #a6a6a6;
    background-color: white;
}

.down {
    margin-top: auto;
    margin-bottom: 1px;
}

/* sheet tabs and horizontal scroll */
.sheetbar {
    display: flex;
    height: 27px;
    background-color: #e6e6e6;
    border-bottom: 1px solid #c8c6c4;
}

.sheet-nav {
    display: flex;
    align-items: center;
    gap: 24px;
    width: 101px;
    padding-left: 27px;
}

.sheet-tab {
    display: flex;
    align-items: center;
    justify-content: center;
    width: 144px;
    height: 24px;
    margin-top: -1px;
    padding-top: 2px;
    background: linear-gradient(white 60%, #e9ecf0);
    border-bottom: 2px solid #217346;
    font-weight: 700;
    font-size: 12.500px;
    color: #217346;
    white-space: nowrap;
}

.add-sheet {
    margin: 5px 0 0 34px;
}

.split-dots {
    width: 3px;
    height: 10px;
    margin: 8px 0 0 669px;
    background: radial-gradient(circle, #8a8886 1px, transparent 1.500px) top / 3px 4px repeat-y;
}

.hscroll {
    display: flex;
    align-items: stretch;
    width: 916px;
    height: 15px;
    margin: 6px 0 0 13px;
    background-color: #f1f1f1;
}

.hthumb {
    width: 82px;
    border: 1px solid #a6a6a6;
    background-color: white;
}

.end {
    margin-left: auto;
}

/* status bar */
.statusbar {
    display: flex;
    align-items: center;
    height: 22px;
    padding-left: 11px;
    font-size: 11px;
    color: #484644;
}

.ready {
    width: 51px;
}

.a11y {
    margin-left: 4px;
    width: 1464px;
    white-space: nowrap;
}

.views {
    display: grid;
    grid-template-columns: repeat(3, 40px);
    height: 22px;
    margin-left: 75px;
    margin-right: 5px;
}

.view {
    display: flex;
    align-items: center;
    justify-content: center;
}

.view.on {
    background-color: #d2d0ce;
}

.zoom-sign {
    width: 10px;
    font-size: 14px;
    text-align: center;
}

.slider {
    display: flex;
    align-items: center;
    justify-content: center;
    width: 100px;
    height: 1px;
    margin: 0 4px;
    background-color: #3b3a39;
}

.slider i {
    flex: none;
    width: 5px;
    height: 11px;
    margin-left: 4px;
    background-color: #3b3a39;
}

.zoom-val {
    margin-left: 12px;
}

/* bit of the windows taskbar */
.taskbar {
    display: flex;
    height: 8px;
    overflow: hidden;
    background-color: #1f333d;
}

.task-window {
    display: flex;
    justify-content: flex-end;
    width: 288px;
    margin-left: 48px;
    padding-right: 20px;
    background-color: #f3f3f3;
}

.task-active {
    width: 47px;
    margin-left: 542px;
    background-color: #3c4e58;
}

.task-clock {
    margin-left: 894px;
    padding-top: 3px;
    line-height: 14px;
    font-size: 12px;
    color: white;
}
```
